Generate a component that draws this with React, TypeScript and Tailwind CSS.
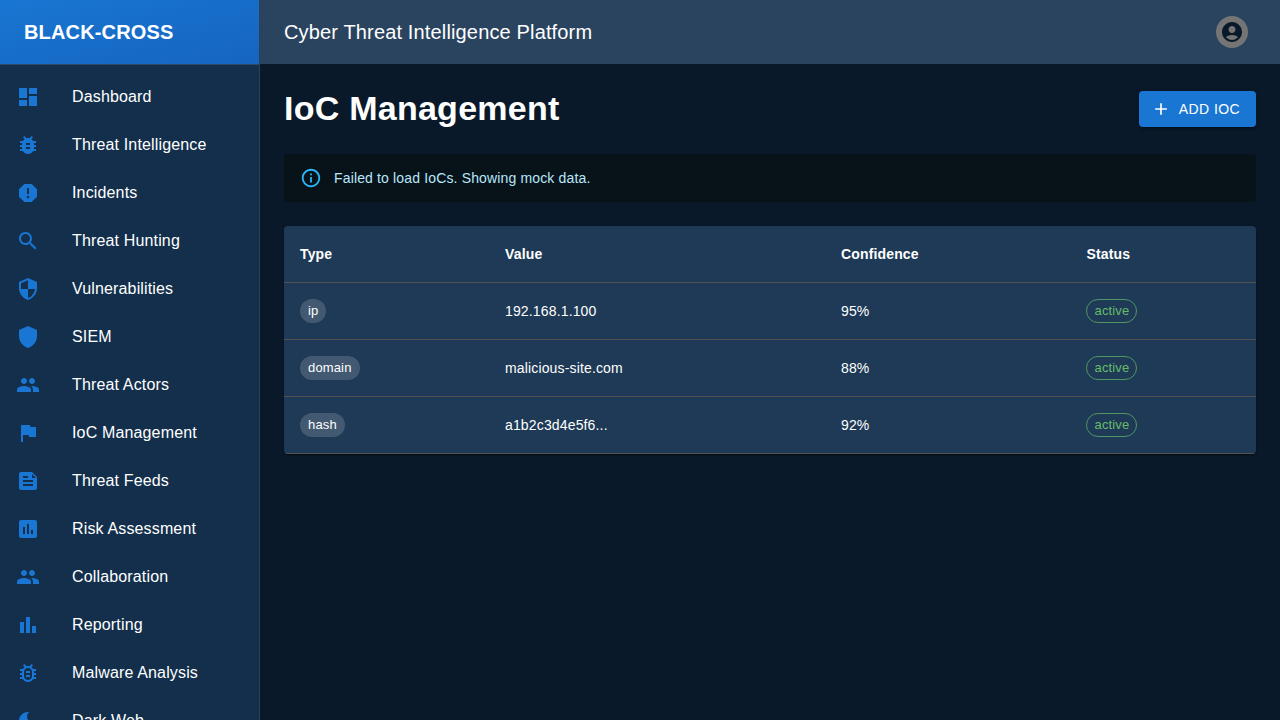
import type { ReactNode } from "react";

const Icon = ({ d, className }: { d: string; className?: string }) => (
  <svg viewBox="0 0 24 24" className={className} fill="currentColor" aria-hidden="true">
    <path d={d} />
  </svg>
);

const bugFilled =
  "M20 8h-2.81c-.45-.78-1.07-1.45-1.82-1.96L17 4.41 15.59 3l-2.17 2.17C12.96 5.06 12.49 5 12 5c-.49 0-.96.06-1.41.17L8.41 3 7 4.41l1.62 1.63C7.88 6.55 7.26 7.22 6.81 8H4v2h2.09c-.05.33-.09.66-.09 1v1H4v2h2v1c0 .34.04.67.09 1H4v2h2.81c1.04 1.79 2.97 3 5.19 3s4.15-1.21 5.19-3H20v-2h-2.09c.05-.33.09-.66.09-1v-1h2v-2h-2v-1c0-.34-.04-.67-.09-1H20V8zm-6 8h-4v-2h4v2zm0-4h-4v-2h4v2z";
const bugOutlined =
  "M20 8h-2.81c-.45-.78-1.07-1.45-1.82-1.96L17 4.41 15.59 3l-2.17 2.17C12.96 5.06 12.49 5 12 5s-.96.06-1.41.17L8.41 3 7 4.41l1.62 1.63C7.88 6.55 7.26 7.22 6.81 8H4v2h2.09c-.05.33-.09.66-.09 1v1H4v2h2v1c0 .34.04.67.09 1H4v2h2.81c1.04 1.79 2.97 3 5.19 3s4.15-1.21 5.19-3H20v-2h-2.09c.05-.33.09-.66.09-1v-1h2v-2h-2v-1c0-.34-.04-.67-.09-1H20V8zm-4 4v3c0 .22-.03.47-.07.7l-.1.65-.37.65c-.72 1.24-2.04 2-3.46 2s-2.74-.77-3.46-2l-.37-.64-.1-.65C8.03 15.47 8 15.22 8 15v-4c0-.23.03-.48.07-.7l.1-.65.37-.65c.3-.52.72-.97 1.21-1.31l.57-.39.74-.18c.31-.08.63-.12.94-.12.32 0 .63.04.95.12l.68.16.61.42c.48.33.89.77 1.19 1.28l.38.65.1.65c.04.22.07.47.07.69v1zm-6 2h4v2h-4zm0-4h4v2h-4z";
const group =
  "M16 11c1.66 0 2.99-1.34 2.99-3S17.66 5 16 5c-1.66 0-3 1.34-3 3s1.34 3 3 3zm-8 0c1.66 0 2.99-1.34 2.99-3S9.66 5 8 5C6.34 5 5 6.34 5 8s1.34 3 3 3zm0 2c-2.33 0-7 1.17-7 3.5V19h14v-2.5c0-2.33-4.67-3.5-7-3.5zm8 0c-.29 0-.62.02-.97.05 1.16.84 1.97 1.97 1.97 3.45V19h6v-2.5c0-2.33-4.67-3.5-7-3.5z";

const navItems = [
  { label: "Dashboard", d: "M3 13h8V3H3v10zm0 8h8v-6H3v6zm10 0h8V11h-8v10zm0-18v6h8V3h-8z" },
  { label: "Threat Intelligence", d: bugFilled },
  {
    label: "Incidents",
    d: "M15.73 3H8.27L3 8.27v7.46L8.27 21h7.46L21 15.73V8.27L15.73 3zM12 17.3c-.72 0-1.3-.58-1.3-1.3 0-.72.58-1.3 1.3-1.3.72 0 1.3.58 1.3 1.3 0 .72-.58 1.3-1.3 1.3zm1-4.3h-2V7h2v6z",
  },
  {
    label: "Threat Hunting",
    d: "M15.5 14h-.79l-.28-.27C15.41 12.59 16 11.11 16 9.5 16 5.91 13.09 3 9.5 3S3 5.91 3 9.5 5.91 16 9.5 16c1.61 0 3.09-.59 4.23-1.57l.27.28v.79l5 4.99L20.49 19l-4.99-5zm-6 0C7.01 14 5 11.99 5 9.5S7.01 5 9.5 5 14 7.01 14 9.5 11.99 14 9.5 14z",
  },
  {
    label: "Vulnerabilities",
    d: "M12 1L3 5v6c0 5.55 3.84 10.74 9 12 5.16-1.26 9-6.45 9-12V5l-9-4zm0 10.99h7c-.53 4.12-3.28 7.79-7 8.94V12H5V6.3l7-3.11v8.8z",
  },
  { label: "SIEM", d: "M12 1L3 5v6c0 5.55 3.84 10.74 9 12 5.16-1.26 9-6.45 9-12V5l-9-4z" },
  { label: "Threat Actors", d: group },
  { label: "IoC Management", d: "M14.4 6L14 4H5v17h2v-7h5.6l.4 2h7V6z" },
  {
    label: "Threat Feeds",
    d: "M16 3H5c-1.1 0-1.99.9-1.99 2L3 19c0 1.1.9 2 2 2h14c1.1 0 2-.9 2-2V8l-5-5zM7 7h5v2H7V7zm10 10H7v-2h10v2zm0-4H7v-2h10v2zm-1-4V5l4 4h-4z",
  },
  {
    label: "Risk Assessment",
    d: "M19 3H5c-1.1 0-2 .9-2 2v14c0 1.1.9 2 2 2h14c1.1 0 2-.9 2-2V5c0-1.1-.9-2-2-2zM9 17H7v-7h2v7zm4 0h-2V7h2v10zm4 0h-2v-4h2v4z",
  },
  { label: "Collaboration", d: group },
  { label: "Reporting", d: "M4 9h4v11H4zm12 4h4v7h-4zm-6-9h4v16h-4z" },
  { label: "Malware Analysis", d: bugOutlined },
  {
    label: "Dark Web",
    d: "M12 3c-4.97 0-9 4.03-9 9s4.03 9 9 9 9-4.03 9-9c0-.46-.04-.92-.1-1.36-.98 1.37-2.58 2.26-4.4 2.26-2.98 0-5.4-2.42-5.4-5.4 0-1.81.89-3.42 2.26-4.4-.44-.06-.9-.1-1.36-.1z",
  },
];

const iocs = [
  { type: "ip", value: "192.168.1.100", confidence: "95%", status: "active" },
  { type: "domain", value: "malicious-site.com", confidence: "88%", status: "active" },
  { type: "hash", value: "a1b2c3d4e5f6...", confidence: "92%", status: "active" },
];

const Th = ({ children, w }: { children: ReactNode; w: string }) => (
  <th className={`${w} border-b border-[#515151] p-4 text-left text-sm leading-6 font-bold text-white`}>{children}</th>
);

const Td = ({ children }: { children: ReactNode }) => (
  <td className="h-[57px] border-b border-[#515151] px-4 py-0 text-sm leading-6 text-white">{children}</td>
);

export default function App() {
  return (
    <div className="flex h-[720px] w-full overflow-hidden bg-[#0a1929] font-['Liberation_Sans',Arial,sans-serif] tracking-[0.15px] text-white">
      {/* sidebar */}
      <aside className="flex h-full w-[260px] shrink-0 flex-col border-r border-[#2b4258] bg-[#132f4c]">
        <div className="flex h-[65px] shrink-0 items-center border-b border-[#2b4a68] bg-gradient-to-br from-[#1976d2] to-[#1565c0] px-6">
          <span className="text-xl leading-8 font-bold">BLACK-CROSS</span>
        </div>
        <nav className="flex-1 overflow-hidden py-2">
          {navItems.map((item) => (
            <div key={item.label} className="flex h-12 items-center px-4">
              <div className="w-14 shrink-0">
                <Icon d={item.d} className="h-6 w-6 text-[#1976d2]" />
              </div>
              <span className="text-base leading-6 text-white">{item.label}</span>
            </div>
          ))}
        </nav>
      </aside>

      <div className="flex min-w-0 flex-1 flex-col">
        {/* top bar */}
        <header className="flex h-16 shrink-0 items-center justify-between bg-[#2a445f] px-6">
          <span className="text-xl leading-8 font-normal">Cyber Threat Intelligence Platform</span>
          <div className="mr-2 flex h-8 w-8 items-center justify-center rounded-full bg-[#757575]">
            <Icon
              d="M12 2C6.48 2 2 6.48 2 12s4.48 10 10 10 10-4.48 10-10S17.52 2 12 2zm0 4c1.93 0 3.5 1.57 3.5 3.5S13.93 13 12 13s-3.5-1.57-3.5-3.5S10.07 6 12 6zm0 14c-2.03 0-4.43-.82-6.14-2.88C7.55 15.8 9.68 15 12 15s4.45.8 6.14 2.12C16.43 19.18 14.03 20 12 20z"
              className="h-6 w-6 text-[#0a1929]"
            />
          </div>
        </header>

        <main className="flex-1 overflow-hidden p-6">
          <div className="mb-6 flex items-center justify-between">
            <h1 className="pb-[2px] text-[34px] leading-[40px] font-bold tracking-[0.25px]">IoC Management</h1>
            <button className="flex h-9 items-center rounded bg-[#1976d2] pr-4 pl-3 text-sm font-medium tracking-[0.4px] text-white uppercase shadow-[0_3px_1px_-2px_rgba(0,0,0,0.2),0_2px_2px_0_rgba(0,0,0,0.14),0_1px_5px_0_rgba(0,0,0,0.12)]">
              <Icon d="M19 13h-6v6h-2v-6H5v-2h6V5h2v6h6v2z" className="mr-2 h-5 w-5" />
              Add IoC
            </button>
          </div>

          <div className="mb-6 flex h-12 items-center rounded bg-[#071318] px-4 text-sm text-[#b8e7fb]">
            <Icon
              d="M11 7h2v2h-2zm0 4h2v6h-2zm1-9C6.48 2 2 6.48 2 12s4.48 10 10 10 10-4.48 10-10S17.52 2 12 2zm0 18c-4.41 0-8-3.59-8-8s3.59-8 8-8 8 3.59 8 8-3.59 8-8 8z"
              className="mr-3 h-[22px] w-[22px] text-[#29b6f6]"
            />
            Failed to load IoCs. Showing mock data.
          </div>

          <div className="overflow-hidden rounded bg-[#1e3a56] shadow-[0_2px_1px_-1px_rgba(0,0,0,0.2),0_1px_1px_0_rgba(0,0,0,0.14),0_1px_3px_0_rgba(0,0,0,0.12)]">
            <table className="w-full table-fixed border-collapse">
              <thead>
                <tr>
                  <Th w="w-[205px]">Type</Th>
                  <Th w="w-[336px]">Value</Th>
                  <Th w="w-[245.5px]">Confidence</Th>
                  <Th w="w-auto">Status</Th>
                </tr>
              </thead>
              <tbody>
                {iocs.map((ioc) => (
                  <tr key={ioc.type}>
                    <Td>
                      <span className="flex h-6 w-fit items-center rounded-full bg-white/16 px-2 text-[13px]">
                        {ioc.type}
                      </span>
                    </Td>
                    <Td>{ioc.value}</Td>
                    <Td>{ioc.confidence}</Td>
                    <Td>
                      <span className="-ml-px flex h-6 w-fit items-center rounded-full border border-[#66bb6a]/70 pr-[7px] pl-[8px] text-[13px] text-[#66bb6a]">
                        {ioc.status}
                      </span>
                    </Td>
                  </tr>
                ))}
              </tbody>
            </table>
          </div>
        </main>
      </div>
    </div>
  );
}
